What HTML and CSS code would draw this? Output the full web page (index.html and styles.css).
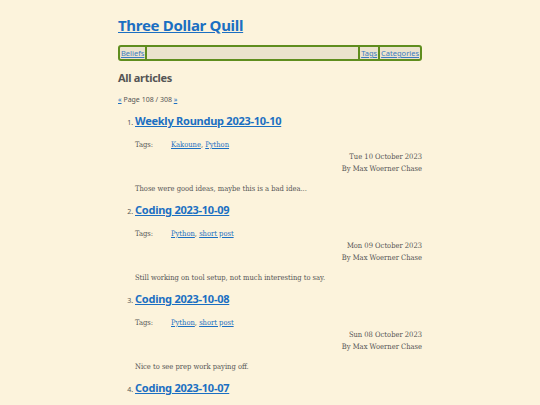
FILE: index.html
```html
<!DOCTYPE html>
<html>
<head>
<meta charset="utf-8">
<link rel="stylesheet" href="styles.css">
</head>
<body>
<div class="page">
  <header class="site-header">
    <h1 class="site-title"><a href="#">Three Dollar Quill</a></h1>
    <nav class="nav">
      <a class="nav-link" href="#">Beliefs</a>
      <span class="nav-spacer"></span>
      <a class="nav-link sep" href="#">Tags</a>
      <a class="nav-link sep" href="#">Categories</a>
    </nav>
  </header>
  <main>
    <h2 class="section-title">All articles</h2>
    <p class="pager"><a href="#">«</a> Page 108 / 308 <a href="#">»</a></p>
    <ol class="articles">
      <li class="article">
        <h3 class="article-title"><a href="#">Weekly Roundup 2023-10-10</a></h3>
        <div class="tags"><span class="tags-label">Tags:</span><span><a href="#">Kakoune</a>, <a href="#">Python</a></span></div>
        <div class="meta">
          <div>Tue 10 October 2023</div>
          <div>By Max Woerner Chase</div>
        </div>
        <p class="summary">Those were good ideas, maybe this is a bad idea...</p>
      </li>
      <li class="article">
        <h3 class="article-title"><a href="#">Coding 2023-10-09</a></h3>
        <div class="tags"><span class="tags-label">Tags:</span><span><a href="#">Python</a>, <a href="#">short post</a></span></div>
        <div class="meta">
          <div>Mon 09 October 2023</div>
          <div>By Max Woerner Chase</div>
        </div>
        <p class="summary">Still working on tool setup, not much interesting to say.</p>
      </li>
      <li class="article">
        <h3 class="article-title"><a href="#">Coding 2023-10-08</a></h3>
        <div class="tags"><span class="tags-label">Tags:</span><span><a href="#">Python</a>, <a href="#">short post</a></span></div>
        <div class="meta">
          <div>Sun 08 October 2023</div>
          <div>By Max Woerner Chase</div>
        </div>
        <p class="summary">Nice to see prep work paying off.</p>
      </li>
      <li class="article">
        <h3 class="article-title"><a href="#">Coding 2023-10-07</a></h3>
        <div class="tags"><span class="tags-label">Tags:</span><span><a href="#">Python</a>, <a href="#">short post</a></span></div>
        <div class="meta">
          <div>Sat 07 October 2023</div>
          <div>By Max Woerner Chase</div>
        </div>
        <p class="summary">Nothing much today.</p>
      </li>
    </ol>
  </main>
</div>
</body>
</html>
```

FILE: styles.css
```css
html, body {
  margin: 0;
  padding: 0;
  background: #fcf3dc;
}
body {
  font-family: "DejaVu Serif Condensed", "DejaVu Serif", serif;
  font-stretch: condensed;
  font-size: 7.5px;
  color: #555;
}
a {
  color: #1b6fc2;
}
.page {
  width: 304px;
  margin: 0 auto;
  padding-top: 14px;
}
.site-title {
  margin: 0;
  font-family: "Noto Sans", sans-serif;
  font-stretch: normal;
  font-size: 15px;
  letter-spacing: -0.3px;
  font-weight: 700;
  line-height: 22px;
}
.nav {
  margin-top: 9px;
  display: flex;
  align-items: stretch;
  border: 2px solid #5f8d1e;
  border-radius: 3px;
  background: #ebe3cd;
  height: 12px;
  font-family: "Noto Sans", sans-serif;
  font-stretch: normal;
  font-size: 7.5px;
  line-height: 12px;
}
.nav-link {
  padding: 0 1px;
  color: #3b7bc0;
}
.nav-link:first-child {
  border-right: 2px solid #5f8d1e;
}
.nav-spacer {
  flex: 1;
}
.nav-link.sep {
  border-left: 2px solid #5f8d1e;
}
.section-title {
  margin: 9px 0 0;
  font-family: "Noto Sans", sans-serif;
  font-stretch: normal;
  font-size: 11px;
  letter-spacing: -0.3px;
  font-weight: 700;
  line-height: 16px;
  color: #555;
}
.pager {
  margin: 8px 0 0;
  font-family: "Noto Sans", sans-serif;
  font-stretch: normal;
  font-size: 7px;
  line-height: 12px;
}
.articles {
  margin: 4px 0 0;
  padding-left: 17px;
}
.article::marker {
  font-family: "Noto Sans", sans-serif;
  font-size: 7px;
  color: #555;
}
.article-title {
  margin: 0;
  font-family: "Noto Sans", sans-serif;
  font-stretch: normal;
  font-size: 11px;
  letter-spacing: -0.25px;
  font-weight: 700;
  line-height: 22px;
}
.tags {
  margin-top: 7px;
  display: flex;
  line-height: 12px;
}
.tags-label {
  width: 36px;
}
.meta {
  text-align: right;
  line-height: 12px;
}
.summary {
  margin: 8px 0 0;
  line-height: 12px;
  padding-bottom: 4px;
}
```
